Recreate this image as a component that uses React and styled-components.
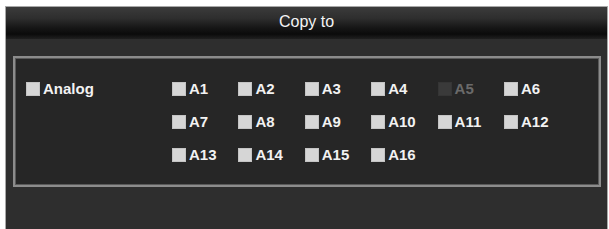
import React from 'react'
import styled, { createGlobalStyle } from 'styled-components'

const Global = createGlobalStyle`
  html, body {
    margin: 0;
    padding: 0;
    background: #fff;
    overflow: hidden;
  }
  body {
    font-family: "Liberation Sans", Arial, sans-serif;
  }
`

const Dialog = styled.div`
  margin: 6px 0 0 5px;
  width: 601px;
  height: 222px;
  border: 1px solid #a8a8a8;
  border-bottom: none;
  background: #2e2e2e;
  box-sizing: content-box;
`

const TitleBar = styled.div`
  height: 32px;
  display: flex;
  align-items: center;
  justify-content: center;
  color: #f4f4f4;
  font-size: 16px;
  background: linear-gradient(
    to bottom,
    #3b3b3b 0%,
    #2e2e2e 35%,
    #161616 65%,
    #0b0b0b 85%,
    #202020 100%
  );
  padding-bottom: 2px;
  box-sizing: border-box;
`

const Panel = styled.div`
  margin: 17px 6px 0 7px;
  height: 131px;
  box-sizing: border-box;
  border: 2px solid #8c8c8c;
  outline: 1px solid #5a5a5a;
  outline-offset: -3px;
  background: #262626;
  padding: 14px 0 0 11px;
  display: flex;
`

const SideCol = styled.div`
  width: 146px;
`

const Grid = styled.div`
  display: grid;
  grid-template-columns: repeat(6, 66.4px);
  grid-auto-rows: 33px;
`

const Item = styled.label`
  display: flex;
  align-items: center;
  gap: 3px;
  height: 33px;
  font-size: 15px;
  font-weight: bold;
  color: ${p => (p.$disabled ? '#6a6a6a' : '#f2f2f2')};
  white-space: nowrap;
`

const Box = styled.span`
  width: 14px;
  height: 14px;
  box-sizing: border-box;
  background: ${p => (p.$disabled ? '#3a3a3a' : '#d6d6d6')};
  border: 1px solid ${p => (p.$disabled ? '#353535' : '#c4c4c4')};
  flex-shrink: 0;
`

const channels = Array.from({ length: 16 }, (_, i) => `A${i + 1}`)

function Check({ label, disabled }) {
  return (
    <Item $disabled={disabled}>
      <Box $disabled={disabled} />
      {label}
    </Item>
  )
}

export default function App() {
  return (
    <>
      <Global />
      <Dialog>
        <TitleBar>Copy to</TitleBar>
        <Panel>
          <SideCol>
            <Check label="Analog" />
          </SideCol>
          <Grid>
            {channels.map(c => (
              <Check key={c} label={c} disabled={c === 'A5'} />
            ))}
          </Grid>
        </Panel>
      </Dialog>
    </>
  )
}
